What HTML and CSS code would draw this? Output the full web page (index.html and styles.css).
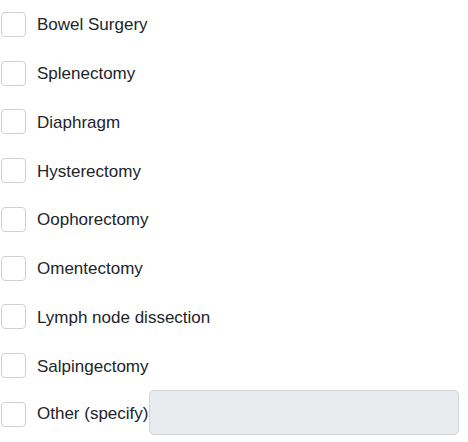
FILE: index.html
```html
<!DOCTYPE html>
<html>
<head>
<meta charset="utf-8">
<link rel="stylesheet" href="styles.css">
</head>
<body>
<div class="list">
  <label class="row"><span class="box"></span><span class="text">Bowel Surgery</span></label>
  <label class="row"><span class="box"></span><span class="text">Splenectomy</span></label>
  <label class="row"><span class="box"></span><span class="text">Diaphragm</span></label>
  <label class="row"><span class="box"></span><span class="text">Hysterectomy</span></label>
  <label class="row"><span class="box"></span><span class="text">Oophorectomy</span></label>
  <label class="row"><span class="box"></span><span class="text">Omentectomy</span></label>
  <label class="row"><span class="box"></span><span class="text">Lymph node dissection</span></label>
  <label class="row"><span class="box"></span><span class="text">Salpingectomy</span></label>
  <div class="row other"><span class="box"></span><span class="text">Other (specify)</span><span class="input"></span></div>
</div>
</body>
</html>
```
FILE: styles.css
```css
html, body {
  margin: 0;
  padding: 0;
  background: #fff;
}
body {
  font-family: "Liberation Sans", Arial, sans-serif;
  font-size: 17px;
  color: #212529;
}
.list {
  display: flex;
  flex-direction: column;
  padding-left: 1px;
}
.row {
  display: flex;
  align-items: center;
  height: 48.75px;
}
.box {
  box-sizing: border-box;
  width: 25px;
  height: 25px;
  border: 1px solid #d0d0d0;
  border-radius: 4px;
  background: #fff;
  flex: none;
}
.text {
  margin-left: 11px;
  line-height: 20px;
  margin-top: 2px;
}
.other {
  align-items: flex-start;
}
.other .box {
  margin-top: 12px;
}
.other .text {
  margin-top: 14px;
}
.input {
  box-sizing: border-box;
  width: 310px;
  height: 45px;
  margin-left: 1px;
  background: #e9ecef;
  border: 1px solid #ced4da;
  border-radius: 5px;
  flex: none;
}
```
